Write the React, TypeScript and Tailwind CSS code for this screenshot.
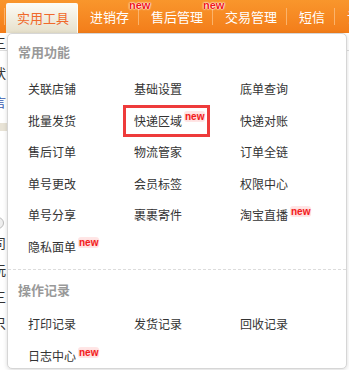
const tabs = [
  { label: "进销存", isNew: true },
  { label: "售后管理", isNew: true },
  { label: "交易管理", isNew: false },
  { label: "短信", isNew: false },
];

const common = [
  { label: "关联店铺" },
  { label: "基础设置" },
  { label: "底单查询" },
  { label: "批量发货" },
  { label: "快递区域", isNew: true, marked: true },
  { label: "快递对账" },
  { label: "售后订单" },
  { label: "物流管家" },
  { label: "订单全链" },
  { label: "单号更改" },
  { label: "会员标签" },
  { label: "权限中心" },
  { label: "单号分享" },
  { label: "裹裹寄件" },
  { label: "淘宝直播", isNew: true },
  { label: "隐私面单", isNew: true },
];

const records = [
  { label: "打印记录" },
  { label: "发货记录" },
  { label: "回收记录" },
  { label: "日志中心", isNew: true },
];

type Item = { label: string; isNew?: boolean; marked?: boolean };

function NewTag() {
  return (
    <span className="relative -top-[4px] ml-[2px] rounded-[3px] bg-[#ffe6e6] px-[1px] font-['Liberation_Sans',Arial,sans-serif] text-[10px] font-bold leading-[11px] text-[#f21c1c] [text-shadow:0_0_2px_#ffc9c9]">
      new
    </span>
  );
}

function MenuItem({ item }: { item: Item }) {
  return (
    <div className="relative flex h-[24px] items-center whitespace-nowrap text-[12px] text-[#333]">
      <span>{item.label}</span>
      {item.isNew && <NewTag />}
      {item.marked && (
        <span className="pointer-events-none absolute -left-[11px] -top-[3.5px] h-[32px] w-[87px] border-[3px] border-[#ee3b3b]" />
      )}
    </div>
  );
}

export default function App() {
  return (
    <div className="relative h-[370px] w-[349px] overflow-hidden bg-white font-['Noto_Sans_CJK_SC','Microsoft_YaHei',sans-serif]">
      {/* top nav */}
      <nav className="flex h-[33px] items-end whitespace-nowrap bg-gradient-to-b from-[#f9962c] to-[#f37d19] text-[13px] text-white">
        <span className="mb-[8px] ml-[4px] h-[17px] w-px shrink-0 bg-[#fbb36b]" />
        <div className="ml-[1px] flex h-[30px] w-[72px] shrink-0 items-center rounded-t-[2px] border-r border-[#fffdf5] bg-gradient-to-b from-[#fdfcf6] to-[#e6e0cb] pb-[1px] pl-[11px] text-[#f0692b]">
          实用工具
        </div>
        {tabs.map((t) => (
          <div key={t.label} className="flex h-full shrink-0 items-center">
            <div className="flex h-full items-center pl-[12px] pr-[9px]">
              <span className="relative leading-[19px]">
                {t.label}
                {t.isNew && (
                  <span className="absolute left-full -top-[7px] font-['Liberation_Sans',Arial,sans-serif] text-[11px] font-bold leading-[10px] text-[#f01818] [text-shadow:0_0_2px_#fff,0_0_2px_#fff,0_0_1px_#fff]">
                    new
                  </span>
                )}
              </span>
            </div>
            <span className="h-[17px] w-px bg-[#fbb36b]" />
          </div>
        ))}
        <div className="flex h-full shrink-0 items-center pl-[12px]">
          <span>订单</span>
        </div>
      </nav>

      {/* page behind the menu */}
      <div className="flex flex-col text-[13px] text-[#333]">
        <div className="-ml-[7px] mt-[2px] h-[16px] border-b border-[#ddd] leading-[16px]">三</div>
        <div className="-ml-[7px] mt-[14px] h-[16px] leading-[16px]">状</div>
        <div className="-ml-[7px] mt-[13px] h-[16px] leading-[16px] text-[#3a5bb0]">言</div>
        <div className="mt-[13px] h-[8px] w-[7px] bg-[#e8e3d6]" />
        <div className="-ml-[8px] mt-[86px] h-[12px] w-[12px] rounded-full border border-[#bbb] bg-[#eee]" />
        <div className="-ml-[7px] mt-[6px] h-[16px] leading-[16px]">司</div>
        <div className="-ml-[7px] mt-[11px] h-[16px] leading-[16px]">沅</div>
        <div className="-ml-[7px] mt-[11px] h-[16px] leading-[16px]">三</div>
        <div className="-ml-[7px] mt-[10px] h-[16px] leading-[16px]">只</div>
      </div>

      {/* dropdown */}
      <div className="absolute left-[7px] top-[33px] w-[340px] rounded-[5px] border border-[#d6d6d6] bg-white shadow-[0_1px_4px_rgba(0,0,0,0.15)]">
        <div className="pl-[10px] pt-[8px] text-[13px] font-bold leading-[20px] text-[#999]">常用功能</div>
        <div className="mt-[15px] grid grid-cols-[106px_106px_106px] gap-y-[7.5px] pl-[20px]">
          {common.map((it) => (
            <MenuItem key={it.label} item={it} />
          ))}
        </div>
        <div className="mt-[10px] border-t border-dashed border-[#dcdcdc]" />
        <div className="pl-[10px] pt-[10px] text-[13px] font-bold leading-[20px] text-[#999]">操作记录</div>
        <div className="mt-[12.5px] grid grid-cols-[106px_106px_106px] gap-y-[8px] pl-[20px]">
          {records.map((it) => (
            <MenuItem key={it.label} item={it} />
          ))}
        </div>
      </div>
    </div>
  );
}
